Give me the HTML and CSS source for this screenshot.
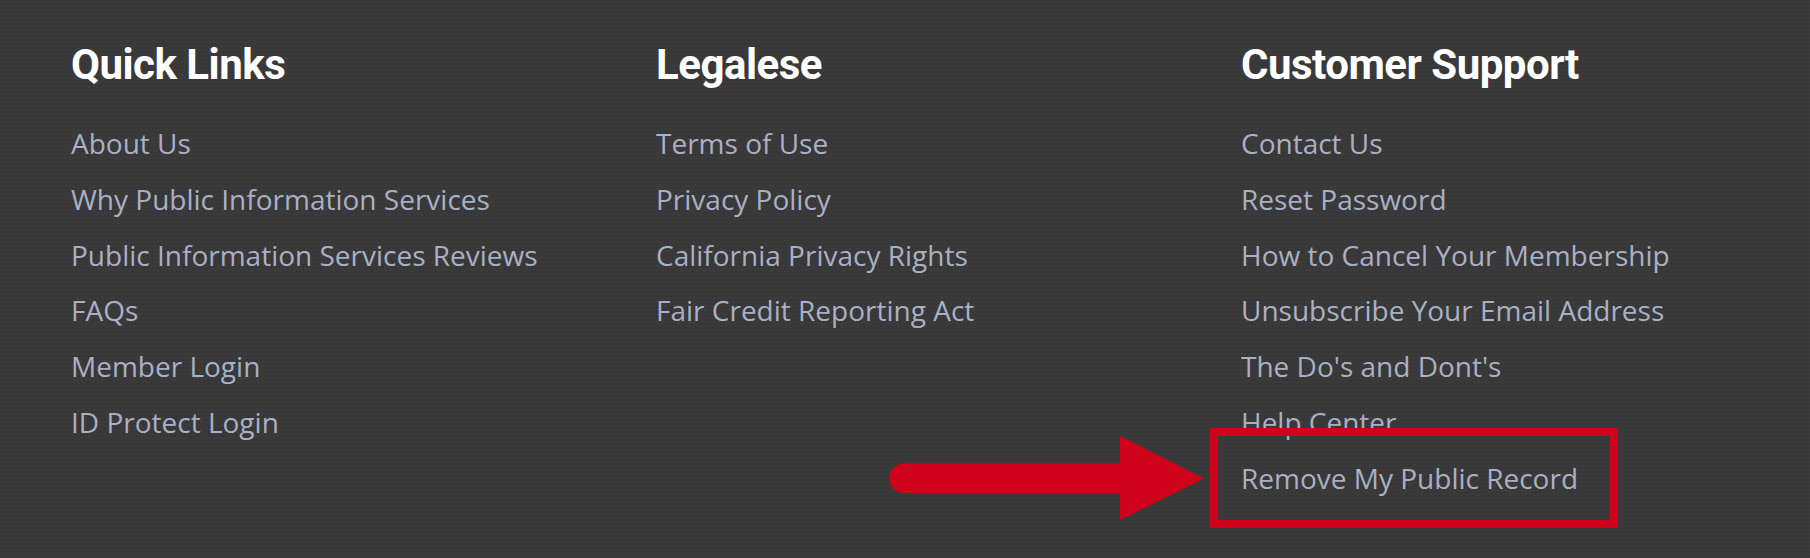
FILE: index.html
```html
<!DOCTYPE html>
<html lang="en">
<head>
<meta charset="utf-8">
<title>Footer</title>
<link rel="stylesheet" href="styles.css">
</head>
<body>
<footer class="footer">
  <div class="cols">
    <section class="col">
      <h3 class="col-title">Quick Links</h3>
      <ul class="links">
        <li><a href="#">About Us</a></li>
        <li><a href="#">Why Public Information Services</a></li>
        <li><a href="#">Public Information Services Reviews</a></li>
        <li><a href="#">FAQs</a></li>
        <li><a href="#">Member Login</a></li>
        <li><a href="#">ID Protect Login</a></li>
      </ul>
    </section>
    <section class="col">
      <h3 class="col-title">Legalese</h3>
      <ul class="links">
        <li><a href="#">Terms of Use</a></li>
        <li><a href="#">Privacy Policy</a></li>
        <li><a href="#">California Privacy Rights</a></li>
        <li><a href="#">Fair Credit Reporting Act</a></li>
      </ul>
    </section>
    <section class="col">
      <h3 class="col-title">Customer Support</h3>
      <ul class="links">
        <li><a href="#">Contact Us</a></li>
        <li><a href="#">Reset Password</a></li>
        <li><a href="#">How to Cancel Your Membership</a></li>
        <li><a href="#">Unsubscribe Your Email Address</a></li>
        <li><a href="#">The Do's and Dont's</a></li>
        <li><a href="#">Help Center</a></li>
        <li><a href="#">Remove My Public Record</a></li>
      </ul>
    </section>
  </div>
  <svg class="arrow" width="316" height="86" viewBox="0 0 316 86" aria-hidden="true">
    <path d="M15 27.5 H231 V0 L315 42.5 L231 84 V57 H15 A14.75 14.75 0 0 1 15 27.5 Z" fill="#d0021b"/>
  </svg>
  <div class="highlight"></div>
</footer>
</body>
</html>
```
FILE: styles.css
```css
html, body {
  margin: 0;
  padding: 0;
  background: #383838;
}
body {
  width: 1810px;
  height: 558px;
  overflow: hidden;
}
.footer {
  position: relative;
  height: 558px;
  background-color: #383838;
  background-image: radial-gradient(rgba(255,255,255,0.02) 1px, transparent 1px);
  background-size: 4px 4px;
}
.cols {
  display: grid;
  grid-template-columns: 585px 585px 585px;
  padding: 39px 0 0 71px;
}
.col-title {
  margin: 0;
  font-family: Roboto, "Noto Sans", sans-serif;
  font-weight: 700;
  font-size: 42px;
  line-height: 52px;
  letter-spacing: -0.5px;
  color: #ffffff;
}
.links {
  list-style: none;
  margin: 25px 0 0;
  padding: 0;
}
.links li {
  font-family: "Open Sans", "Noto Sans", sans-serif;
  font-size: 28px;
  line-height: 55.8px;
}
.links a {
  color: #a9b0c5;
  text-decoration: none;
}
.arrow {
  position: absolute;
  left: 889px;
  top: 436px;
}
.highlight {
  position: absolute;
  left: 1210px;
  top: 428px;
  width: 392px;
  height: 84px;
  border: 8px solid #d0021b;
}
```
